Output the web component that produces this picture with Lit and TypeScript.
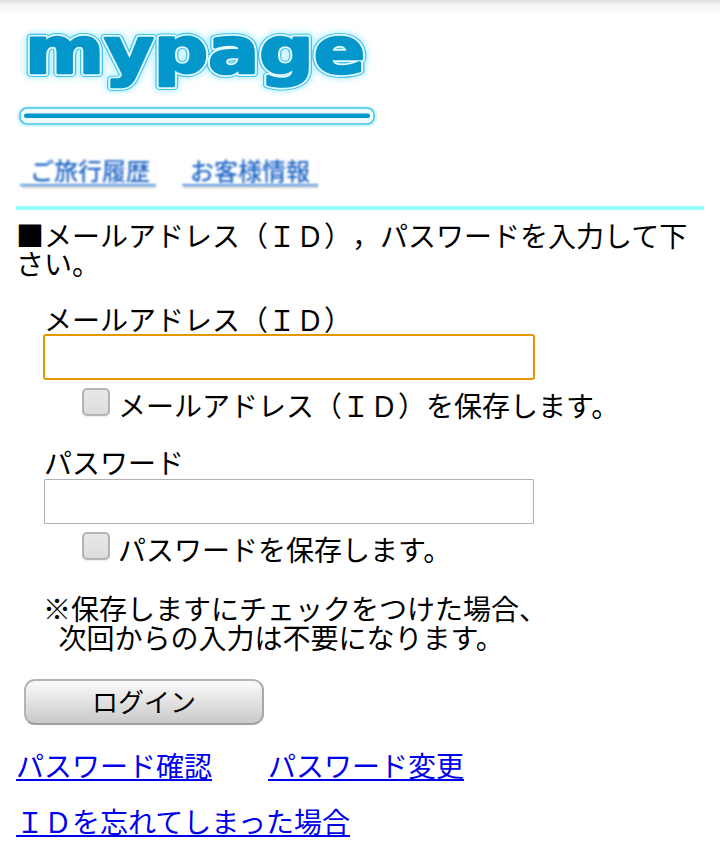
import { LitElement, html, css, svg } from "lit";
import { customElement } from "lit/decorators.js";

const word = (cls: string) =>
  svg`<text class=${cls} x="9" y="0" transform="translate(0 58) scale(1 0.84)">mypage</text>`;

@customElement("app-root")
export class AppRoot extends LitElement {
  static styles = css`
    :host {
      display: block;
      width: 720px;
      height: 862px;
      overflow: hidden;
      box-sizing: border-box;
      padding: 15px 16px 0;
      background: linear-gradient(#dcdcdc 0, #f2f2f2 4px, #ffffff 16px) top / 100% 16px no-repeat #fff;
      font-family: "Noto Sans CJK JP", "DejaVu Sans", sans-serif;
      font-size: 28px;
      line-height: 28px;
      color: #000;
      text-spacing-trim: space-all;
    }
    .logo { display: block; width: 364px; height: 116px; }
    .logo text {
      font-family: "DejaVu Sans", sans-serif;
      font-weight: 700;
      font-size: 76px;
      stroke-linejoin: round;
    }
    .glow { fill: #c8f5ff; stroke: #c8f5ff; stroke-width: 15px; filter: blur(2.5px); }
    .ring { fill: #45c2ea; stroke: #45c2ea; stroke-width: 9.5px; }
    .gap { fill: #e6fbff; stroke: #e6fbff; stroke-width: 7px; }
    .core { fill: #0497cc; stroke: #0497cc; stroke-width: 3px; }
    .nav { display: flex; gap: 26px; margin: 24px 0 0 4px; height: 31px; }
    .nav-item {
      width: 136px;
      box-sizing: border-box;
      height: 31px;
      padding-left: 10px;
      font-size: 24px;
      line-height: 29px;
      font-weight: 500;
      color: #2468c8;
      white-space: nowrap;
      border-bottom: 2px solid #5a9be6;
      box-shadow: 1px 3px 1px -1px #d4d4d4;
      filter: blur(0.8px);
    }
    .nav-item.second { padding-left: 8px; }
    hr {
      border: 0;
      height: 4px;
      margin: 20px 0 0;
      background: #99ffff;
    }
    .intro { margin: 11px 0 0 0; }
    form { display: block; }
    .label { margin-left: 28px; }
    .field-label { margin-top: 28px; }
    .pw-label { margin-top: 31px; margin-left: 28px; }
    .input {
      display: block;
      box-sizing: border-box;
      width: 492px;
      height: 46px;
      margin: 1px 0 0 27px;
      padding: 0 6px;
      border: 1px solid #b0b0b0;
      border-radius: 1px;
      background: #fff;
      outline: none;
      font: inherit;
    }
    .input.pw { margin: 3px 0 0 28px; width: 490px; height: 45px; }
    .input.focus { border: 2px solid #e59700; border-radius: 3px; }
    .check {
      display: flex;
      align-items: center;
      gap: 8px;
      margin: 7px 0 0 66px;
      height: 30px;
    }
    .check span:last-child { padding-top: 6px; }
    .box {
      box-sizing: border-box;
      width: 28px;
      height: 28px;
      border: 2px solid #b4b4b4;
      border-radius: 5px;
      background: linear-gradient(#e8e8e8, #dcdcdc);
      box-shadow: 0 1px 1px #eee;
    }
    .note { margin: 33px 0 0 27px; line-height: 29px; white-space: pre; word-spacing: 1.5px; }
    .btn {
      display: block;
      box-sizing: border-box;
      width: 240px;
      height: 46px;
      margin: 27px 0 0 8px;
      border: 2px solid #b4b4b4;
      border-bottom-color: #a0a0a0;
      border-right-color: #a8a8a8;
      border-radius: 11px;
      background: linear-gradient(#fbfbfb, #c9c9c9);
      font: inherit;
      font-size: 26px;
      line-height: 38px;
      padding: 0 0 2px;
      color: #000;
    }
    .links { display: flex; gap: 56px; margin-top: 26px; }
    a { color: #0000ee; text-decoration: underline; }
    .forgot { margin-top: 28px; }
  `;

  render() {
    return html`
      <svg class="logo" viewBox="0 0 364 116" role="img" aria-label="mypage">
        ${word("glow")} ${word("ring")} ${word("gap")} ${word("core")}
        <rect x="1" y="91" width="360" height="21" rx="9" fill="#d4f7ff"></rect>
        <rect x="4" y="93" width="354" height="16" rx="7" fill="#eefcff" stroke="#45c2ea" stroke-width="1.6"></rect>
        <rect x="8" y="98.5" width="346" height="4.5" rx="2" fill="#0497cc"></rect>
      </svg>
      <div class="nav">
        <div class="nav-item">ご旅行履歴</div>
        <div class="nav-item second">お客様情報</div>
      </div>
      <hr />
      <div class="intro">■メールアドレス（ＩＤ），パスワードを入力して下さい。</div>
      <form>
        <div class="label field-label">メールアドレス（ＩＤ）</div>
        <input class="input focus" type="text" />
        <div class="check"><span class="box"></span><span>メールアドレス（ＩＤ）を保存します。</span></div>
        <div class="label pw-label">パスワード</div>
        <input class="input pw" type="password" />
        <div class="check"><span class="box"></span><span>パスワードを保存します。</span></div>
        <div class="note">※保存しますにチェックをつけた場合、
  次回からの入力は不要になります。</div>
        <button class="btn" type="button">ログイン</button>
      </form>
      <div class="links"><a href="#">パスワード確認</a><a href="#">パスワード変更</a></div>
      <div class="forgot"><a href="#">ＩＤを忘れてしまった場合</a></div>
    `;
  }
}
